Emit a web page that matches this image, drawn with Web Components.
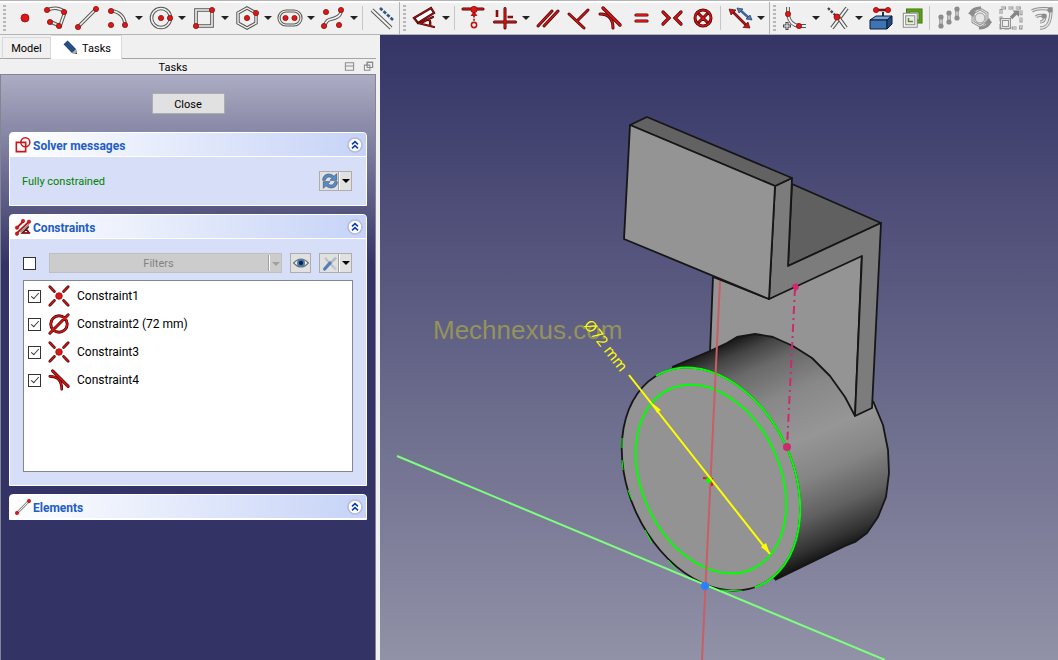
<!DOCTYPE html>
<html lang="en">
<head>
<meta charset="utf-8">
<title>Sketcher</title>
<style>
html, body { margin: 0; height: 100%; }
body { font: 11px/16px Roboto, "Noto Sans", sans-serif; color: #000; background: #f0f0f0; overflow: hidden; }
</style>
</head>
<body>
<cad-app></cad-app>

<script>
/* ---------- icon drawing helpers (24 x 24 canvas) ---------- */
const tube = (d, w = 4, fill = '#f4f4f4', edge = '#555753') =>
  `<path d="${d}" fill="none" stroke="${edge}" stroke-width="${w}"/><path d="${d}" fill="none" stroke="${fill}" stroke-width="${w - 2}"/>`;
const red = (d, w = 3) =>
  `<path d="${d}" fill="none" stroke="#3c0606" stroke-width="${w}" stroke-linecap="round"/><path d="${d}" fill="none" stroke="#d81313" stroke-width="${w - 1.4}" stroke-linecap="round"/>`;
const dot = (x, y, r = 2.6) => `<circle cx="${x}" cy="${y}" r="${r}" fill="#e01515" stroke="#8a1010" stroke-width=".8"/>`;
const gdot = (x, y, r = 2.6) => `<circle cx="${x}" cy="${y}" r="${r}" fill="#8c8c8c"/>`;
const coincident = red('M2 2L7 7M22 2L17 7M2 22L7 17M22 22L17 17', 3) + dot(12, 12, 3.6);
const tangent = red('M2 8C11 8 15 13 15 22', 3) + red('M5 2L22 19', 3.4);
const lineIcon = tube('M3 21L21 3', 3.6) + dot(3, 21) + dot(21, 3);

const ICONS = {
  point: dot(12, 12, 4),
  polyline: tube('M3 4C10 1 16 2 21 6L16 20L7 16', 3.6) + dot(3, 4) + dot(20, 6) + dot(15, 20) + dot(6, 16),
  line: lineIcon,
  arc: tube('M5 5C13 5 19 11 19 19', 3.6) + dot(5, 5) + dot(19, 19) + dot(5, 19),
  circle: tube('M2.5 12a9.5 9.5 0 1 0 19 0a9.5 9.5 0 1 0-19 0', 3.6) + dot(12, 12) + dot(21, 12),
  rect: tube('M4 4H20V20H4Z', 3.6) + dot(20, 4) + dot(4, 20),
  hexagon: tube('M12 2L21 7V17L12 22L3 17V7Z', 3.4) + dot(12, 12) + dot(21, 7),
  slot: tube('M8 5H16a7 7 0 0 1 0 14H8a7 7 0 0 1 0-14Z', 3.2) + dot(7.5, 12, 2.6) + dot(16.5, 12, 2.6),
  spline: tube('M3 21C6 12 9 14 14 12C19 10 20 8 20 4', 3.6) + dot(3, 20) + dot(20, 4) + dot(5, 6) + dot(18, 19),
  construction: tube('M2 4L21 22', 4) + '<path d="M10 2L23 14" stroke="#34557f" stroke-width="2.600" stroke-dasharray="3.400 1.400"/>',
  dimension: '<path d="M1 12L18 2L21 7L5 17Z" fill="#fff"/>' + red('M1 12L18 2L21 7L5 17Z', 2.2) + red('M5 17L21 21M8 17L20 11M16 13Q18 16 17 20', 2.2),
  distance: red('M1 3H21', 3) + '<path d="M12 6V17" stroke="#8a1010" stroke-width="1.6" stroke-dasharray="2 1.4"/><path d="M8.500 10L12 5L15.500 10Z" fill="#c01515"/><circle cx="12" cy="19" r="2.600" fill="#fff" stroke="#c01515" stroke-width="1.600"/>' + dot(12, 3.5, 3.2),
  hv: red('M1.500 16H22.500M12 2.500V22', 3) + '<path d="M4 4V11M14.500 11H20" stroke="#8a0c0c" stroke-width="2.600"/>',
  parallel: red('M2 20L16 5M8 20L22 5', 3),
  perpendicular: red('M2 8L17 22M10 15L21 4', 3),
  tangent,
  equal: red('M7 9H18M7 15H18', 3.2),
  symmetric: red('M3 6L9 12L3 18M21 6L15 12L21 18', 3.2),
  block: red('M4 12a8 8 0 1 0 16 0a8 8 0 1 0-16 0M8 8L16 16M16 8L8 16', 3),
  toggle: red('M4 5L19 20', 2.6) + '<path d="M1 3L8 4L3 9ZM22 22L15 21.500L20 16Z" fill="#c81313" stroke="#3c0606" stroke-width=".6"/><path d="M12 4L21 12" stroke="#3c6497" stroke-width="2.400"/><path d="M9 2L15 3L11 7ZM24 14L18 13L22 9Z" fill="#4e7db8" stroke="#1f3c63" stroke-width=".7"/>',
  fillet: tube('M5 1V9Q7 19 16 20H23', 3.8) + '<path d="M4 16V24M0 20H8" stroke="#444" stroke-width="3"/><path d="M4 17V23M1 20H7" stroke="#fff" stroke-width="1"/>' + dot(5, 8) + dot(16, 20),
  trim: tube('M6 22L21 2', 4) + tube('M12 11L20 22', 4) + '<path d="M2 2L11 11" stroke="#444" stroke-width="2.400" stroke-dasharray="2.600 1.400"/>' + dot(11, 11, 3),
  external: red('M7 4H18', 2.4) + '<path d="M14 6V13H10" fill="none" stroke="#17365c" stroke-width="2"/><path d="M1 14L7 10H23L18 14Z" fill="#7aa6d8" stroke="#0b1d35"/><path d="M1 14H18V23H1Z" fill="#3f74b3" stroke="#0b1d35"/><path d="M18 14L23 10V18L18 23Z" fill="#204a87" stroke="#0b1d35"/>' + dot(7, 4) + dot(19, 4),
  carbon: '<path d="M8 4.500H20.500V15.500H8Z" fill="none" stroke="#3a6b0c" stroke-width="4"/><path d="M8 4.500H20.500V15.500H8Z" fill="none" stroke="#5aa014" stroke-width="2.400"/><path d="M4.500 8.500H16V20H4.500Z" fill="#ececec"/><path d="M8.500 12V15.500H13" fill="none" stroke="#4e8d10" stroke-width="1.400"/>' + tube('M4.500 8.500H16V20H4.500Z', 3.4, '#fafafa', '#8a8a8a'),
  array: tube('M4 11V20M12 7V16M20 3V12', 3.4, '#ddd', '#8c8c8c') + [[4,11],[4,20],[12,7],[12,16],[20,3],[20,12]].map(p => gdot(...p)).join(''),
  rotate: tube('M12 3L19 7V16L12 20L5 16V7Z', 3, '#e4e4e4', '#999') + '<circle cx="12" cy="12" r="5" fill="#e6e6e6" stroke="#999"/><path d="M2 8A10 8 0 0 1 13 2M22 15A10 8 0 0 1 11 22" fill="none" stroke="#8c8c8c" stroke-width="3"/><path d="M0 7L8 5L5 11ZM24 17L16 18L21 12Z" fill="#8c8c8c"/>',
  scale: '<path d="M2 2H22V22H2Z" fill="none" stroke="#929292" stroke-width="3" stroke-dasharray="5 2.400"/><path d="M2 2H22V22H2Z" fill="none" stroke="#eee" stroke-width="1" stroke-dasharray="4 3.400"/><path d="M1 12H12V23H1Z" fill="#efefef"/>' + tube('M2.500 13.500H10.500V21.500H2.500Z', 3, '#e4e4e4', '#929292') + '<path d="M12 12L17 7" stroke="#858585" stroke-width="3.400"/><path d="M13.500 4.500H20V11Z" fill="#858585"/>',
  offset: tube('M2 5C8 1 14 3 21 3C21 14 19 22 10 22', 3.4, '#e4e4e4', '#929292') + tube('M6 11C9 8 12 10 15 10C15 14 13 16 10 16', 3.2, '#e4e4e4', '#929292') + gdot(20, 4) + gdot(14, 10),
  coincident,
  diameter: red('M3 12a9 9 0 1 0 18 0a9 9 0 1 0-18 0M2 22L22 2', 3.2),
  solver: '<path d="M2 8H16V22H2Z" fill="none" stroke="#c81818" stroke-width="2.400"/><circle cx="15.500" cy="8" r="6.800" fill="none" stroke="#c81818" stroke-width="2.200"/>',
  constraints: '<path d="M3 13L13 3M2 22L21 4" stroke="#b51616" stroke-width="2.800"/><path d="M8 20L21 8" stroke="#888" stroke-width="2"/>' + red('M20 12L11 21H22M17 15L21 21', 2.4) + dot(3, 13) + dot(12, 3) + dot(21, 4) + dot(3, 22),
  element: lineIcon,
  pencil: '<g transform="rotate(-44 12 12)"><path d="M8 0H16V17L12 23L8 17Z" fill="#1c4478"/><path d="M10.500 0V17M13.500 0V17" stroke="#3f6ea6" stroke-width="1"/><path d="M8 17L12 23L16 17Z" fill="#b9ad96"/><path d="M10.700 21L12 23L13.300 21Z" fill="#222"/></g>',
  refresh: '<path d="M1 11C1 1 12 -1 18 5L22 1V11H12L15 8C11 4 6 6 5 11Z" fill="#5a8cc4" stroke="#35557c"/><path d="M23 13C23 23 12 25 6 19L2 23V13H12L9 16C13 20 18 18 19 13Z" fill="#5a8cc4" stroke="#35557c"/>',
  eye: '<path d="M1 12Q12 0 23 12Q12 24 1 12Z" fill="#f2f3ee" stroke="#6d7470" stroke-width="1.800"/><circle cx="12" cy="12" r="6" fill="#4a7ab4"/><circle cx="12" cy="12" r="3.200" fill="#0d2340"/>',
  tools: '<path d="M5 5L18 19" stroke="#b8bcc0" stroke-width="3"/><path d="M3 4L7 3L6 8Z" fill="#c2c6ca"/><path d="M21 4L12 13" stroke="#b4bac2" stroke-width="4"/><path d="M12 12L4 21" stroke="#4f80bb" stroke-width="5" stroke-linecap="round"/><path d="M17 17L21 22" stroke="#c7cacd" stroke-width="4"/>',
  chevrons: '<circle cx="12" cy="12" r="10.500" fill="#fff" stroke="#b5b9dc" stroke-width="2.400"/><path d="M7.500 11L12 7L16.500 11M7.500 17L12 13L16.500 17" fill="none" stroke="#0c3ea8" stroke-width="2.400"/>',
  restore: '<path d="M3 4H21V20H3ZM3 11H21" fill="none" stroke="#8a8a8a" stroke-width="2.200"/>',
  float: '<path d="M9 3H21V14H9ZM3 9H15V20H3Z" fill="#f0f0f0" stroke="#8a8a8a" stroke-width="2.200"/><path d="M9 9V3H21V14H15" fill="none" stroke="#8a8a8a" stroke-width="2.200"/>',
};

const define = (name, html) => customElements.define(name, class extends HTMLElement {
  connectedCallback() {
    if (this.shadowRoot) return;
    const t = document.createElement('template');
    t.innerHTML = typeof html === 'function' ? html(this) : html;
    this.attachShadow({ mode: 'open' }).append(t.content.cloneNode(true));
  }
});

define('cad-icon', el => `
  <style>:host { display: block; flex: none; width: var(--size, 24px); height: var(--size, 24px); } svg { display: block; width: 100%; height: 100%; overflow: visible; }</style>
  <svg viewBox="0 0 24 24" aria-hidden="true">${ICONS[el.getAttribute('name')]}</svg>`);

/* toolbar button with an optional drop-down arrow */
define('tool-button', el => `
  <style>
    :host { display: flex; flex: none; height: 32px; }
    button { border: 0; padding: 0; background: none; display: grid; place-items: center; width: 31px; }
    .menu { width: 12px; }
    .menu::before { content: ""; border: 4px solid transparent; border-top-color: #222; border-bottom: 0; }
  </style>
  <button type="button" aria-label="${el.getAttribute('icon')}"><cad-icon name="${el.getAttribute('icon')}"></cad-icon></button>
  ${el.hasAttribute('menu') ? '<button type="button" class="menu" aria-label="more"></button>' : ''}`);

define('tool-group', `
  <style>
    :host { display: flex; flex: none; align-items: center; box-sizing: border-box; padding: 0 2px 0 3px; border-right: 1px solid #b4b4b4; }
    :host(:last-of-type) { border-right: 0; }
    .grip { flex: none; width: 3px; height: 26px; margin-right: 3px; background: repeating-linear-gradient(#b8b8b8 0 2px, #f0f0f0 2px 4px); }
    ::slotted(hr) { flex: none; width: 1px; height: 24px; margin: 0 3px 0 2px; border: 0; background: #c6c6c6; }
  </style>
  <span class="grip"></span><slot></slot>`);

const group = list => '<tool-group>' + list.split(' ').map(n =>
  n === '|' ? '<hr>' : `<tool-button icon="${n.replace('+', '')}"${n.endsWith('+') ? ' menu' : ''}></tool-button>`).join('') + '</tool-group>';

define('cad-toolbar', `
  <style>:host { display: flex; height: 32px; border-top: 1px solid #b4b4b4; border-bottom: 1px solid #b4b4b4; padding-top: 1px; overflow: hidden; background: linear-gradient(#fff 0 2px, #f0f0f0 2px); }</style>
  ${group('point polyline line arc+ circle+ rect+ hexagon+ slot+ spline+ | construction')}
  ${group('dimension+ | distance hv+ parallel perpendicular tangent equal symmetric block | toggle+')}
  ${group('fillet+ trim+ external carbon | array rotate scale offset')}`);

define('dock-tabs', `
  <style>
    :host { display: flex; align-items: flex-end; height: 24px; padding-left: 2px; box-sizing: border-box; box-shadow: inset 0 -1px #a5a5a5; }
    button { font: inherit; color: inherit; display: flex; align-items: center; justify-content: center; gap: 2px; box-sizing: border-box; height: 22px; min-width: 49px; padding: 2px 8px 0; border: 1px solid #d9d9d9; border-bottom-color: #a5a5a5; background: #f0f0f0; --size: 17px; }
    button[aria-selected=true] { height: 24px; min-width: 71px; padding: 2px 10px 0 12px; border-left: 0; border-bottom: 0; background: #fff; }
  </style>
  <div role="tablist" style="display:contents">
    <button type="button" role="tab" aria-selected="false">Model</button>
    <button type="button" role="tab" aria-selected="true"><cad-icon name="pencil"></cad-icon>Tasks</button>
  </div>`);

define('dock-title', `
  <style>
    :host { display: flex; align-items: center; height: 15px; padding-right: 2px; }
    span { flex: 1; text-align: center; padding: 2px 0 0 10px; }
    button { border: 0; padding: 0; margin-left: 8px; background: none; --size: 11px; }
  </style>
  <span><slot></slot></span>
  <button type="button" aria-label="Collapse"><cad-icon name="restore"></cad-icon></button>
  <button type="button" aria-label="Float"><cad-icon name="float"></cad-icon></button>`);

/* collapsible box with a gradient header */
define('task-box', el => `
  <style>
    :host { display: block; border: 1px solid #fff; border-radius: 4px 4px 0 0; background: #d6dff7; overflow: hidden; }
    header { display: flex; align-items: center; height: 23px; padding: 0 3px 0 5px; gap: 2px; background: linear-gradient(90deg, #fff, #c6d3f7); --size: 16px; }
    h2 { flex: 1; margin: 0; padding-top: 2px; font: bold 12px/16px Roboto, "Noto Sans", sans-serif; color: #215dc6; }
    button { border: 0; padding: 0; background: none; }
    .body { border-top: 1px solid #fff; padding: 0 14px 0 12px; }
    :host([closed]) .body { padding: 0; }
  </style>
  <header><cad-icon name="${el.getAttribute('icon')}"></cad-icon><h2>${el.getAttribute('heading')}</h2>
    <button type="button" aria-label="Toggle"><cad-icon name="chevrons"></cad-icon></button></header>
  <div class="body"><slot></slot></div>`);

define('split-button', el => `
  <style>
    :host { display: flex; box-sizing: border-box; height: 20px; border: 1px solid #adadad; background: #e1e1e1; }
    button { border: 0; padding: 0; background: none; display: grid; place-items: center; width: 19px; --size: 16px; }
    .menu { width: 12px; border-left: 1px solid #fff; box-shadow: -1px 0 #a0a0a0; }
    .menu::before { content: ""; border: 4px solid transparent; border-top-color: #000; border-bottom: 0; }
  </style>
  <button type="button" aria-label="${el.getAttribute('icon')}"><cad-icon name="${el.getAttribute('icon')}"></cad-icon></button>
  ${el.hasAttribute('menu') ? '<button type="button" class="menu" aria-label="more"></button>' : ''}`);

const checkboxStyle = `
  input { appearance: none; flex: none; display: grid; place-items: center; box-sizing: border-box; width: 13px; height: 13px; margin: 0; border: 1px solid #333; background: #fff; }
  input:checked::before { content: ""; width: 3px; height: 7px; border: solid #333; border-width: 0 1px 1px 0; transform: translateY(-1px) rotate(42deg); }`;

define('solver-status', `
  <style>:host { display: flex; align-items: center; justify-content: space-between; height: 48px; color: #008000; } span { padding-top: 2px; }</style>
  <span><slot></slot></span><split-button icon="refresh" menu></split-button>`);

define('filter-bar', `
  <style>
    :host { display: flex; align-items: center; box-sizing: border-box; height: 41px; padding: 7px 0 0 1px; }
    ${checkboxStyle}
    .combo { position: relative; flex: 1; display: flex; margin: 0 8px 0 13px; }
    select { appearance: none; flex: 1; box-sizing: border-box; height: 20px; margin: 0; padding: 2px 14px 0 0; font: inherit; line-height: 16px; text-align: center; text-align-last: center; color: #838383; opacity: 1; border: 1px solid #bfbfbf; border-radius: 0; background: #ccc; }
    .combo::before { content: ""; position: absolute; right: 12px; top: 2px; bottom: 2px; width: 1px; background: #fff; box-shadow: -1px 0 #a0a0a0; }
    .combo::after { content: ""; position: absolute; right: 2px; top: 9px; border: 4px solid transparent; border-top-color: #a0a0a0; border-bottom: 0; }
    split-button + split-button { margin-left: 8px; }
  </style>
  <input type="checkbox" aria-label="Enable filters">
  <label class="combo"><select disabled aria-label="Filters"><option>Filters</option></select></label>
  <split-button icon="eye"></split-button><split-button icon="tools" menu></split-button>`);

define('constraint-list', `
  <style>:host { display: block; box-sizing: border-box; height: 192px; margin: 0 -1px 13px 1px; padding: 1px 4px; border: 1px solid #828790; background: #fff; }</style>
  <slot></slot>`);

define('constraint-row', el => `
  <style>:host { display: block; }
    label { display: flex; align-items: center; height: 28px; font-size: 12px; --size: 22px; }
    cad-icon { margin: 0 7px; }
    ${checkboxStyle}</style>
  <label><input type="checkbox" checked><cad-icon name="${el.getAttribute('icon')}"></cad-icon><slot></slot></label>`);

define('task-panel', `
  <style>
    :host { display: flex; flex-direction: column; gap: 8px; flex: 1; padding: 18px 8px 0 8px; border: 1px solid #848494; border-bottom: 0; background: linear-gradient(#acacc3, #333366 190px); }
    .close { align-self: center; font: inherit; box-sizing: border-box; width: 73px; height: 21px; padding: 2px 0 0; margin-bottom: 10px; border: 1px solid #adadad; background: #e1e1e1; color: #000; }
  </style>
  <button type="button" class="close">Close</button>
  <task-box icon="solver" heading="Solver messages"><solver-status>Fully constrained</solver-status></task-box>
  <task-box icon="constraints" heading="Constraints">
    <filter-bar></filter-bar>
    <constraint-list>
      <constraint-row icon="coincident">Constraint1</constraint-row>
      <constraint-row icon="diameter">Constraint2 (72 mm)</constraint-row>
      <constraint-row icon="coincident">Constraint3</constraint-row>
      <constraint-row icon="tangent">Constraint4</constraint-row>
    </constraint-list>
  </task-box>
  <task-box icon="element" heading="Elements" closed></task-box>`);

/* 3D view: bracket with a boss, and the sketch on its front face */
define('scene-view', `
  <style>
    :host { display: block; flex: 1; min-width: 0; overflow: hidden; background: linear-gradient(#343466, #9191a7); }
    svg { display: block; width: 100%; height: 100%; }
    .mark { font: 26px "Liberation Sans", Arial, sans-serif; fill: #93935b; }
    .dim { font: 15px "Open Sans", "Noto Sans", sans-serif; fill: #ff0; }
  </style>
  <svg viewBox="380 35 678 625" preserveAspectRatio="xMidYMid slice">
    <defs>
      <linearGradient id="cyl" gradientUnits="userSpaceOnUse" x1="672" y1="367" x2="764" y2="583">
        <stop offset="0" stop-color="#1c1c1c"/><stop offset=".06" stop-color="#444"/><stop offset=".15" stop-color="#6a6a6a"/><stop offset=".3" stop-color="#888"/>
        <stop offset=".5" stop-color="#969696"/><stop offset=".66" stop-color="#858585"/><stop offset=".82" stop-color="#606060"/><stop offset=".94" stop-color="#333"/><stop offset="1" stop-color="#151515"/>
      </linearGradient>
    </defs>
    <g stroke="#161616" stroke-width="1.800" stroke-linejoin="round">
      <path d="M713 277L710 352L780 420L855 416L862 250L769 299Z" fill="#949494"/>
      <path d="M672 367L710 351L727 343L737 337L755 334L773 337L793 346L812 358L830 376L845 397L855 416L872 408L873 401L883 425L888 450L889 473L886 497L878 517L867 533L855 542L845 546L775 580L700 500Z" fill="url(#cyl)" stroke="none"/>
      <path d="M672 367L710 351L727 343L737 337L755 334L773 337L793 346L812 358L830 376L845 397L855 416M873 401L883 425L888 450L889 473L886 497L878 517L867 533L855 542L845 546L775 580" fill="none"/>
      <path d="M792 184L881 223L788 266Z" fill="#606060"/>
      <path d="M775 186L792 178L788 266L881 223L872 408L855 416L862 256L769 299Z" fill="#7c7c7c"/>
      <path d="M630 125L647 117L792 178L775 186Z" fill="#626262"/>
      <path d="M630 125L775 186L769 299L624 239Z" fill="#949494"/>
      <ellipse cx="711" cy="479" rx="82" ry="117" transform="rotate(-25 711 479)" fill="#939393"/>
    </g>
    <path d="M397 456L885 660" stroke="#7dff7d" stroke-width="2"/>
    <g fill="none" stroke="#0f0" stroke-width="2">
      <ellipse cx="711" cy="479" rx="69" ry="99" transform="rotate(-25 711 479)"/>
      <ellipse cx="711" cy="479" rx="82" ry="117" transform="rotate(-25 711 479)" pathLength="100" stroke-dasharray="26 48 26 0"/>
      <path d="M622 438V448M622 460L623 470M628 490L632 500M645 530L652 543M668 560L676 570M720 590L742 591" stroke-width="1"/>
    </g>
    <path d="M720 281L702 660" stroke="#c95f64" stroke-width="2"/>
    <path d="M795 288L787 447" stroke="#cc2a6c" stroke-width="2" stroke-dasharray="8 4 2 4"/>
    <path d="M792 285L797 283L799 288L795 292Z" fill="#d6246e"/>
    <circle cx="787" cy="447" r="4" fill="#cc2a6c"/>
    <path d="M703 478L712 479L712 486" fill="none" stroke="#d32020" stroke-width="2"/><circle cx="709" cy="480" r="3" fill="#0f0"/>
    <circle cx="705" cy="586" r="4" fill="#2a80ff"/>
    <path d="M629 375L770 554" stroke="#ff0" stroke-width="2"/>
    <path d="M652 403L661 410L657 413ZM770 554L761 547L766 543Z" fill="#ff0"/>
    <text class="mark" x="433" y="339">Mechnexus.com</text>
    <text class="dim" transform="translate(583 325) rotate(52)">Ø72 mm</text>
  </svg>`);

define('cad-app', `
  <style>
    :host { display: flex; flex-direction: column; height: 100vh; }
    main { flex: 1; display: flex; min-height: 0; }
    aside { flex: none; display: flex; flex-direction: column; width: 376px; margin-right: 4px; }
  </style>
  <cad-toolbar></cad-toolbar>
  <main>
    <aside><dock-tabs></dock-tabs><dock-title>Tasks</dock-title><task-panel></task-panel></aside>
    <scene-view></scene-view>
  </main>`);
</script>
</body>
</html>
